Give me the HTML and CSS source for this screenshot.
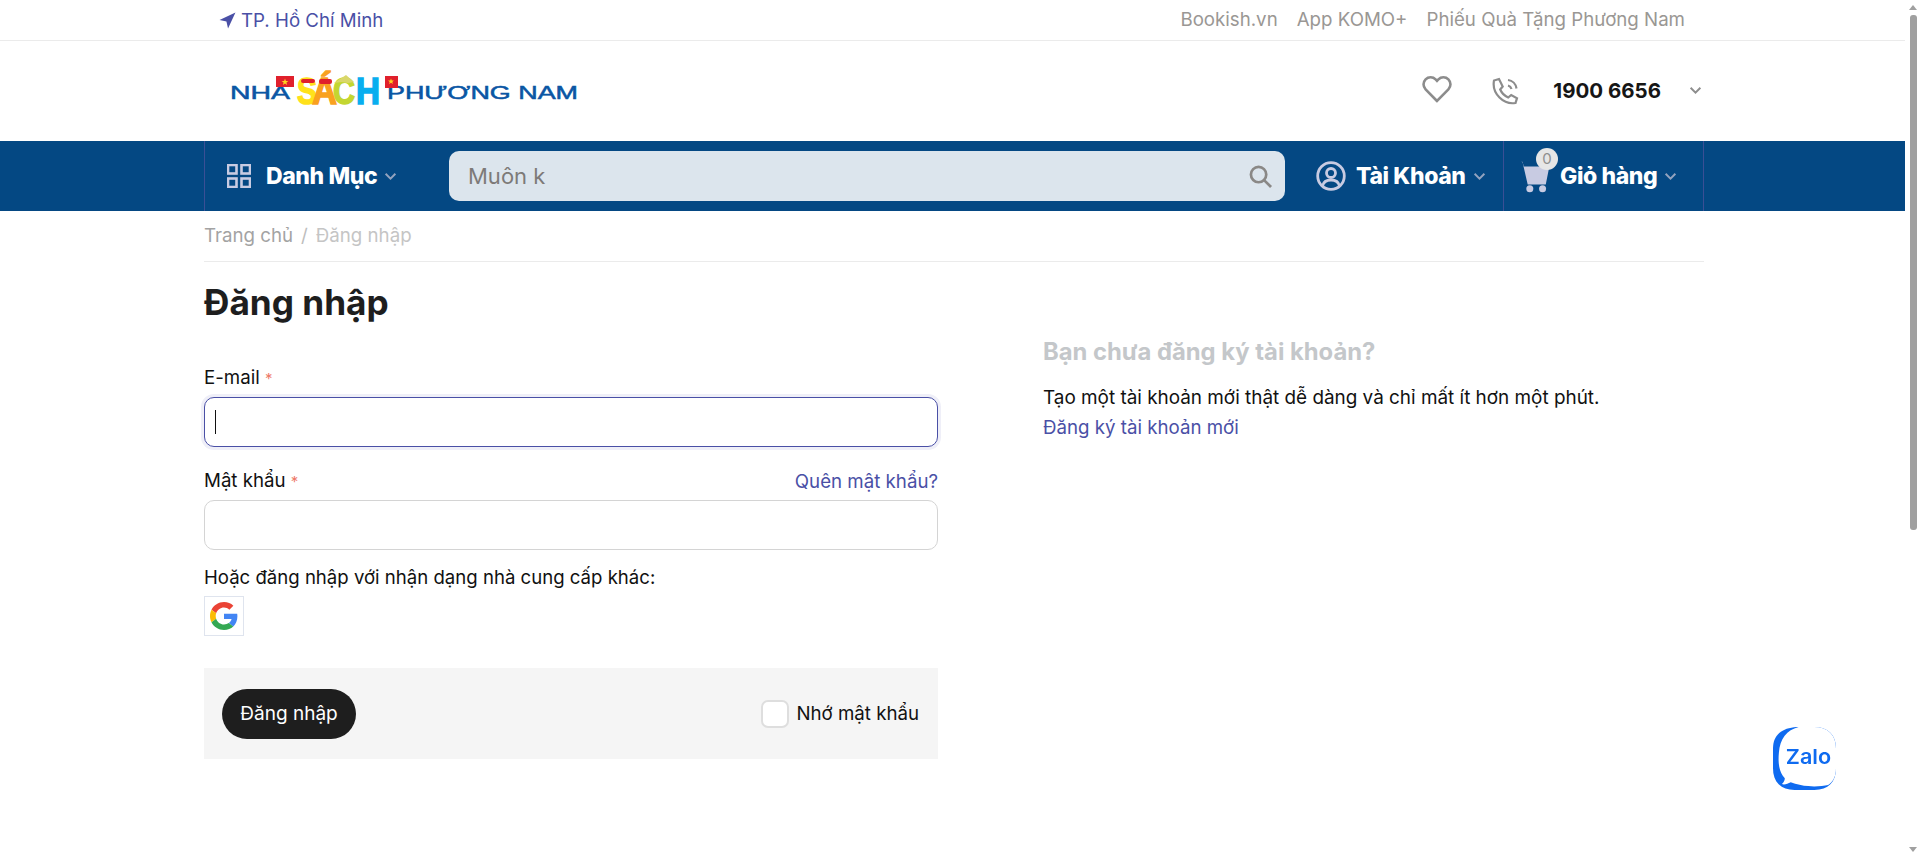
FILE: index.html
```html
<!DOCTYPE html>
<html lang="vi">

<head>
    <meta charset="UTF-8" />
    <title>Đăng nhập - Nhà Sách Phương Nam</title>
    <link rel="stylesheet" href="styles.css">
</head>

<body>
    <div class="topbar">
        <div class="container topbar-inner">
            <a class="top-location" href="#">
                <svg class="icon-location" viewBox="0 0 16 16"><path d="M15.500 .5 .5 7.500l6.500 1.500 1.500 6.500z" /></svg>
                TP. Hồ Chí Minh
            </a>
            <div class="top-links">
                <a href="#">Bookish.vn</a>
                <a href="#">App KOMO+</a>
                <a href="#">Phiếu Quà Tặng Phương Nam</a>
            </div>
        </div>
    </div>

    <header class="container site-header">
        <svg class="logo" viewBox="0 0 360 44" role="img" aria-label="Nhà Sách Phương Nam">
            <text class="logo-thin" x="8" y="33" textLength="60" lengthAdjust="spacingAndGlyphs">NHÀ</text>
            <text class="logo-thin" x="165" y="33" textLength="191" lengthAdjust="spacingAndGlyphs">PHƯƠNG NAM</text>
            <rect x="54" y="10" width="18" height="11" fill="#e0202c" />
            <path d="M63 12.500l.9 2.400 2.500.1-2 1.500.7 2.400-2.100-1.400-2.100 1.400.7-2.400-2-1.500 2.500-.1z" fill="#ffd21f" />
            <rect x="163" y="10" width="13" height="12" fill="#e0202c" />
            <path d="M169 12.500l.8 2 2.100.1-1.600 1.300.6 2-1.900-1.200-1.900 1.200.6-2-1.600-1.300 2.100-.1z" fill="#ffd21f" />
            <text class="logo-big logo-s" x="75" y="38" textLength="20" lengthAdjust="spacingAndGlyphs">S</text>
            <text class="logo-big logo-a" x="90" y="38" textLength="25" lengthAdjust="spacingAndGlyphs">Á</text>
            <text class="logo-big logo-c" x="111" y="38" textLength="22" lengthAdjust="spacingAndGlyphs">C</text>
            <text class="logo-big logo-h" x="134" y="38" textLength="24" lengthAdjust="spacingAndGlyphs">H</text>
            <rect x="79" y="13" width="14" height="4" rx="2" fill="#e0202c" />
            <rect x="97" y="13" width="13" height="5" rx="2" fill="#e0202c" />
            <path d="M112 17 124 9l8 7-6 1-6-1z" fill="#d9d76a" />
        </svg>
        <div class="header-actions">
            <svg class="icon-heart" viewBox="0 0 30 28"><path d="M15 26 3.600 14.400a7.200 7.200 0 0 1 0-10.100 7 7 0 0 1 10 0L15 5.800l1.400-1.500a7 7 0 0 1 10 0 7.200 7.200 0 0 1 0 10.100z" /></svg>
            <svg class="icon-phone" viewBox="0 0 28 28">
                <path d="M8 2 3 3.500C1.800 10 4 16 8.500 20.500S18.500 27 24.500 26l1.500-4.800-5.800-3.200-3 2.500c-3.500-1.500-6.500-4.500-8-8l2.500-3z" />
                <path d="M17 8.500a5 5 0 0 1 3.500 3.500M17 3a10 10 0 0 1 8.500 8.500" />
            </svg>
            <strong class="hotline">1900 6656</strong>
            <svg class="chevron chevron-dark" viewBox="0 0 12 8"><path d="M1.500 1.500 6 6l4.500-4.500" /></svg>
        </div>
    </header>

    <nav class="navbar">
        <div class="container navbar-inner">
            <a class="nav-menu" href="#">
                <svg class="icon-grid" viewBox="0 0 24 24">
                    <rect x="1" y="1" width="8.500" height="8.500" />
                    <rect x="14.500" y="1" width="8.500" height="8.500" />
                    <rect x="1" y="14.500" width="8.500" height="8.500" />
                    <rect x="14.500" y="14.500" width="8.500" height="8.500" />
                </svg>
                <span>Danh Mục</span>
                <svg class="chevron" viewBox="0 0 12 8"><path d="M1.500 1.500 6 6l4.500-4.500" /></svg>
            </a>
            <form class="search">
                <input type="text" placeholder="Muôn k" />
                <svg class="icon-search" viewBox="0 0 24 24">
                    <circle cx="10" cy="10" r="8" />
                    <path d="m16 16 7 7" />
                </svg>
            </form>
            <a class="nav-account" href="#">
                <svg class="icon-user" viewBox="0 0 30 30">
                    <circle cx="15" cy="15" r="13.300" />
                    <circle cx="15" cy="12" r="4.500" />
                    <path d="M6.500 25c1-4.500 4-6 8.500-6s7.500 1.500 8.500 6" />
                </svg>
                <span>Tài Khoản</span>
                <svg class="chevron" viewBox="0 0 12 8"><path d="M1.500 1.500 6 6l4.500-4.500" /></svg>
            </a>
            <a class="nav-cart" href="#">
                <span class="cart-icon">
                    <svg viewBox="0 0 32 32">
                        <path class="cart-fill" d="M0 2.500h4.500c1 0 1.600.5 1.900 1.500L11 24h17l3-15-2-2H7.500L6 2.500z" />
                        <circle class="cart-fill" cx="13" cy="28" r="3.300" />
                        <circle class="cart-fill" cx="25" cy="28" r="3.300" />
                    </svg>
                    <span class="cart-badge">0</span>
                </span>
                <span>Giỏ hàng</span>
                <svg class="chevron" viewBox="0 0 12 8"><path d="M1.500 1.500 6 6l4.500-4.500" /></svg>
            </a>
        </div>
    </nav>

    <div class="container">
        <div class="breadcrumb">
            <a href="#">Trang chủ</a>
            <span class="crumb-sep">/</span>
            <span class="crumb-current">Đăng nhập</span>
        </div>

        <h1 class="page-title">Đăng nhập</h1>

        <div class="login-grid">
            <form class="login-form">
                <label class="field-label">E-mail <span class="req">*</span></label>
                <div class="input-wrap">
                    <input class="field-input is-focus" type="email" />
                    <span class="caret"></span>
                </div>

                <div class="label-row">
                    <label class="field-label">Mật khẩu <span class="req">*</span></label>
                    <a class="link" href="#">Quên mật khẩu?</a>
                </div>
                <input class="field-input" type="password" />

                <p class="provider-text">Hoặc đăng nhập với nhận dạng nhà cung cấp khác:</p>
                <a class="google-btn" href="#">
                    <svg viewBox="0 0 48 48">
                        <path fill="#EA4335" d="M24 9.500c3.540 0 6.710 1.220 9.210 3.600l6.850-6.850C35.900 2.380 30.470 0 24 0 14.620 0 6.510 5.380 2.560 13.220l7.980 6.190C12.430 13.720 17.740 9.500 24 9.500z" />
                        <path fill="#4285F4" d="M46.980 24.550c0-1.570-.15-3.090-.38-4.550H24v9.020h12.940c-.58 2.960-2.260 5.480-4.780 7.180l7.730 6c4.510-4.180 7.090-10.360 7.090-17.650z" />
                        <path fill="#FBBC05" d="M10.530 28.590c-.48-1.450-.76-2.990-.76-4.590s.27-3.140.76-4.590l-7.980-6.190C.92 16.460 0 20.120 0 24c0 3.880.92 7.540 2.560 10.780l7.970-6.190z" />
                        <path fill="#34A853" d="M24 48c6.480 0 11.930-2.130 15.890-5.810l-7.730-6c-2.150 1.450-4.920 2.300-8.160 2.300-6.260 0-11.570-4.220-13.470-9.910l-7.980 6.190C6.510 42.620 14.620 48 24 48z" />
                    </svg>
                </a>

                <div class="form-footer">
                    <button type="button" class="btn-login">Đăng nhập</button>
                    <label class="remember">
                        <span class="checkbox"></span>
                        Nhớ mật khẩu
                    </label>
                </div>
            </form>

            <aside class="register-box">
                <h2>Bạn chưa đăng ký tài khoản?</h2>
                <p>Tạo một tài khoản mới thật dễ dàng và chỉ mất ít hơn một phút.</p>
                <a class="link" href="#">Đăng ký tài khoản mới</a>
            </aside>
        </div>
    </div>

    <a class="zalo" href="#">
        <svg viewBox="0 0 64 64">
            <path fill="#0f6bf0" d="M24 0h18C56 0 64 8 64 22v20c0 14-8 22-22 22H22C8 64 0 56 0 42V22C0 8 9 1 24 0z" />
            <path fill="#fff" d="M26 0h16c14 0 22 8 22 22v20c0 8-3 14-8 17-5 1-14 2-20 1-6-.5-12-2-18-4-3 1.500-6 3-9 2 2-2 3-4 3-6C6 46 5 36 6 26 7 12 14 3 26 0z" />
            <text class="zalo-text" x="13" y="38" textLength="46" lengthAdjust="spacingAndGlyphs">Zalo</text>
        </svg>
    </a>

    <div class="scrollbar">
        <span class="scroll-up"></span>
        <span class="scroll-thumb"></span>
        <span class="scroll-down"></span>
    </div>
</body>

</html>
```

FILE: styles.css
```css
:root {
    --navy: #044883;
    --nav-line: #3a4f95;
    --indigo: #4a50a6;
    --grey-text: #9a9794;
    --ink: #1e1e1e;
    --line: #ebebeb;
    --lavender: #c8cbe2;
}

* {
    box-sizing: border-box;
}

body {
    margin: 0;
    font-family: Inter, "Noto Sans", sans-serif;
    font-size: 18.7px;
    color: #111;
    background: #fff;
}

a {
    text-decoration: none;
    color: inherit;
}

.container {
    width: 1500px;
    margin-left: 204px;
}

/* top bar */
.topbar {
    height: 41px;
    border-bottom: 1px solid var(--line);
}

.topbar-inner {
    display: flex;
    align-items: center;
    justify-content: space-between;
    height: 40px;
    padding: 0 19px 0 15px;
}

.top-location {
    display: flex;
    align-items: center;
    gap: 5px;
    color: var(--indigo);
}

.icon-location {
    width: 17px;
    height: 17px;
    fill: var(--indigo);
}

.top-links {
    display: flex;
    gap: 19px;
    margin-top: -1px;
    color: var(--grey-text);
}

/* logo row */
.site-header {
    display: flex;
    align-items: center;
    justify-content: space-between;
    height: 100px;
}

.logo {
    width: 360px;
    height: 44px;
    margin-left: 18px;
    margin-top: -6px;
    overflow: visible;
}

.logo-thin {
    font-family: "Liberation Sans", sans-serif;
    font-weight: 400;
    font-size: 18px;
    fill: #0a56a4;
    stroke: #0a56a4;
    stroke-width: 0.5;
}

.logo-big {
    font-family: "Liberation Sans", sans-serif;
    font-weight: 700;
    font-size: 36px;
    stroke-width: 1.5;
}

.logo-s {
    fill: #ffe11a;
    stroke: #ffe11a;
}

.logo-a {
    fill: #f9a11f;
    stroke: #f9a11f;
}

.logo-c {
    fill: #c3d631;
    stroke: #c3d631;
}

.logo-h {
    fill: #08aeef;
    stroke: #08aeef;
}

.header-actions {
    display: flex;
    align-items: center;
    margin-top: -2px;
    padding-right: 2px;
}

.icon-heart {
    width: 30px;
    height: 28px;
    margin-top: -2px;
    margin-right: 39px;
    fill: none;
    stroke: #8c8c8c;
    stroke-width: 2.6;
}

.icon-phone {
    width: 28px;
    height: 28px;
    margin-top: 2px;
    margin-right: 34px;
    fill: none;
    stroke: #8c8c8c;
    stroke-width: 2.2;
}

.hotline {
    font-size: 20.5px;
    font-weight: 700;
    color: #161616;
    margin-right: 28px;
}

.chevron {
    width: 13px;
    height: 9px;
    fill: none;
    stroke: #93a3bf;
    stroke-width: 1.8;
}

.chevron-dark {
    stroke: #8d8d8d;
}

/* main nav */
.navbar {
    height: 70px;
    background: var(--navy);
}

.navbar-inner {
    display: flex;
    align-items: stretch;
    height: 70px;
    border-left: 1px solid var(--nav-line);
    border-right: 1px solid var(--nav-line);
    color: #fff;
    font-size: 23px;
    font-weight: 800;
    letter-spacing: -0.4px;
}

.nav-menu,
.nav-account,
.nav-cart {
    display: flex;
    align-items: center;
}

.nav-menu {
    width: 244px;
    padding-left: 22px;
}

.nav-menu .chevron {
    margin-left: 7px;
}

.icon-grid {
    width: 24px;
    height: 24px;
    margin-right: 15px;
    fill: none;
    stroke: var(--lavender);
    stroke-width: 2.6;
}

.search {
    position: relative;
    width: 836px;
    height: 50px;
    margin-top: 10px;
}

.search input {
    width: 100%;
    height: 50px;
    padding: 0 60px 0 19px;
    border: none;
    border-radius: 10px;
    background: #dce5ed;
    font-family: inherit;
    font-size: 22px;
    font-weight: 400;
    letter-spacing: 0;
}

.search input::placeholder {
    color: #7d7a78;
    opacity: 1;
}

.icon-search {
    position: absolute;
    right: 13px;
    top: 14px;
    width: 23px;
    height: 23px;
    fill: none;
    stroke: #8a8886;
    stroke-width: 2.8;
}

.nav-account {
    width: 219px;
    padding-left: 31px;
    border-right: 1px solid var(--nav-line);
}

.icon-user {
    width: 30px;
    height: 30px;
    margin-right: 10px;
    fill: none;
    stroke: var(--lavender);
    stroke-width: 2.8;
}

.nav-account .chevron {
    margin-left: 7px;
}

.nav-cart {
    padding-left: 17px;
}

.nav-cart .chevron {
    margin-left: 7px;
}

.cart-icon {
    position: relative;
    width: 34px;
    height: 34px;
    margin-left: -5px;
    margin-right: 10px;
}

.cart-icon svg {
    display: block;
    width: 34px;
    height: 34px;
}

.cart-fill {
    fill: var(--lavender);
}

.cart-badge {
    position: absolute;
    top: -11px;
    right: -8px;
    width: 22px;
    height: 22px;
    border-radius: 50%;
    background: #e6e6e6;
    color: #8f8f8f;
    font-size: 15px;
    font-weight: 400;
    line-height: 22px;
    text-align: center;
    letter-spacing: 0;
}

/* page body */
.breadcrumb {
    display: flex;
    align-items: center;
    gap: 8px;
    height: 51px;
    border-bottom: 1px solid var(--line);
    color: #a3a3a3;
    padding-bottom: 2px;
}

.crumb-sep {
    color: #bdbdbd;
}

.crumb-current {
    color: #c5c5c5;
}

.page-title {
    margin: 20px 0 0;
    font-size: 35.2px;
    line-height: 40px;
    font-weight: 700;
    color: var(--ink);
}

.login-grid {
    display: grid;
    grid-template-columns: 734px 1fr;
    column-gap: 105px;
    margin-top: 44px;
}

.field-label {
    display: block;
    line-height: 24px;
}

.req {
    color: #ee7a6a;
    font-size: 15px;
}

.input-wrap {
    position: relative;
}

.field-input {
    display: block;
    width: 100%;
    height: 50px;
    margin-top: 6px;
    border: 1px solid #d4d4d4;
    border-radius: 10px;
    background: #fff;
    outline: none;
}

.is-focus {
    border-color: var(--indigo);
    box-shadow: 0 0 0 3px #efeff8;
}

.caret {
    position: absolute;
    left: 11px;
    top: 13px;
    width: 1px;
    height: 24px;
    background: #111;
}

.label-row {
    display: flex;
    justify-content: space-between;
    align-items: center;
    margin-top: 22px;
}

.link {
    color: var(--indigo);
}

.provider-text {
    margin: 15px 0 0;
    line-height: 24px;
    font-size: 18.6px;
}

.google-btn {
    display: flex;
    align-items: center;
    justify-content: center;
    width: 40px;
    height: 40px;
    margin-top: 7px;
    border: 1px solid #dfe4ee;
}

.google-btn svg {
    width: 28px;
    height: 28px;
}

.form-footer {
    display: flex;
    align-items: center;
    justify-content: space-between;
    height: 91px;
    margin-top: 32px;
    padding: 0 19px 0 18px;
    background: #f5f5f5;
}

.btn-login {
    width: 134px;
    height: 50px;
    border: none;
    border-radius: 25px;
    background: var(--ink);
    color: #fff;
    font-family: inherit;
    font-size: 19px;
}

.remember {
    display: flex;
    align-items: center;
    gap: 7px;
}

.checkbox {
    width: 28px;
    height: 28px;
    border: 2px solid #dedede;
    border-radius: 7px;
    background: #fff;
}

.register-box {
    margin-top: -30px;
}

.register-box h2 {
    margin: 0;
    font-size: 23.8px;
    line-height: 32px;
    font-weight: 700;
    color: #c4c7ca;
}

.register-box p {
    margin: 15px 0 0;
    line-height: 30px;
    font-size: 18.9px;
}

.register-box .link {
    display: block;
    line-height: 30px;
}

/* floating chat */
.zalo {
    position: fixed;
    left: 1773px;
    top: 727px;
    width: 63px;
    height: 63px;
}

.zalo svg {
    display: block;
    width: 63px;
    height: 63px;
}

.zalo-text {
    font-family: Inter, sans-serif;
    font-weight: 600;
    font-size: 21px;
    fill: #0f6bf0;
}

/* page scrollbar, the shot has one at the right edge */
.scrollbar {
    position: fixed;
    top: 0;
    right: 0;
    bottom: 0;
    width: 15px;
    background: #fff;
}

.scroll-up,
.scroll-down {
    position: absolute;
    left: 4px;
    border-left: 4.5px solid transparent;
    border-right: 4.5px solid transparent;
}

.scroll-up {
    top: 5px;
    border-bottom: 5px solid #a0a0a0;
}

.scroll-down {
    bottom: 5px;
    border-top: 5px solid #a0a0a0;
}

.scroll-thumb {
    position: absolute;
    top: 15px;
    left: 5px;
    width: 7px;
    height: 515px;
    border-radius: 3px;
    background: #a0a0a0;
}
```
